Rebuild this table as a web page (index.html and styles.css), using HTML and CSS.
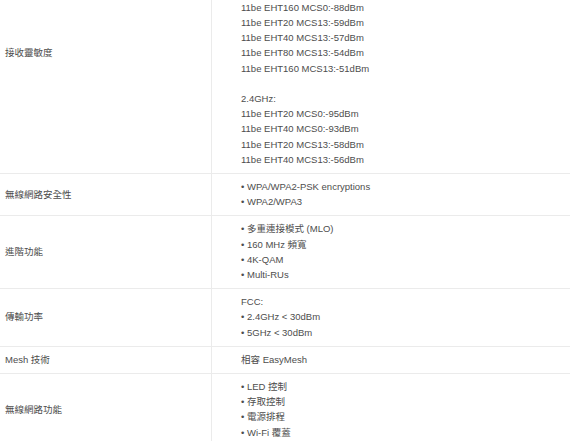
FILE: index.html
```html
<!DOCTYPE html>
<html lang="zh-Hant">
<head>
<meta charset="utf-8">
<link rel="stylesheet" href="styles.css">
</head>
<body>
<div class="specs">
  <div class="row">
    <div class="label">接收靈敏度</div>
    <div class="value">
      <div>5GHz:</div>
      <div>11be EHT20 MCS0:-97dBm</div>
      <div>11be EHT40 MCS0:-94dBm</div>
      <div>11be EHT80 MCS0:-91dBm</div>
      <div>11be EHT160 MCS0:-88dBm</div>
      <div>11be EHT20 MCS13:-59dBm</div>
      <div>11be EHT40 MCS13:-57dBm</div>
      <div>11be EHT80 MCS13:-54dBm</div>
      <div>11be EHT160 MCS13:-51dBm</div>
      <div class="blank"></div>
      <div>2.4GHz:</div>
      <div>11be EHT20 MCS0:-95dBm</div>
      <div>11be EHT40 MCS0:-93dBm</div>
      <div>11be EHT20 MCS13:-58dBm</div>
      <div>11be EHT40 MCS13:-56dBm</div>
    </div>
  </div>
  <div class="row">
    <div class="label">無線網路安全性</div>
    <div class="value">
      <div>• WPA/WPA2-PSK encryptions</div>
      <div>• WPA2/WPA3</div>
    </div>
  </div>
  <div class="row">
    <div class="label">進階功能</div>
    <div class="value">
      <div>• 多重連接模式 (MLO)</div>
      <div>• 160 MHz 頻寬</div>
      <div>• 4K-QAM</div>
      <div>• Multi-RUs</div>
    </div>
  </div>
  <div class="row">
    <div class="label">傳輸功率</div>
    <div class="value">
      <div>FCC:</div>
      <div>• 2.4GHz &lt; 30dBm</div>
      <div>• 5GHz &lt; 30dBm</div>
    </div>
  </div>
  <div class="row">
    <div class="label">Mesh 技術</div>
    <div class="value">
      <div>相容 EasyMesh</div>
    </div>
  </div>
  <div class="row">
    <div class="label">無線網路功能</div>
    <div class="value">
      <div>• LED 控制</div>
      <div>• 存取控制</div>
      <div>• 電源排程</div>
      <div>• Wi-Fi 覆蓋</div>
    </div>
  </div>
</div>
</body>
</html>
```

FILE: styles.css
```css
html, body {
  margin: 0;
  padding: 0;
  background: #fff;
}

body {
  font-family: "Liberation Sans", Arial, "Noto Sans CJK TC", sans-serif;
  font-size: 9.5px;
  line-height: 15.2px;
  color: #4d4d4d;
  overflow: hidden;
}

.specs {
  margin-top: -66px;
  width: 570px;
}

.row {
  display: grid;
  grid-template-columns: 212px 1fr;
  border-bottom: 1px solid #ebebeb;
}

.label {
  display: flex;
  align-items: center;
  padding: 5px 0 6px 5px;
  border-right: 1px solid #ebebeb;
}

.value {
  padding: 5px 0 6px 29px;
}

.blank {
  height: 15.2px;
}
```
